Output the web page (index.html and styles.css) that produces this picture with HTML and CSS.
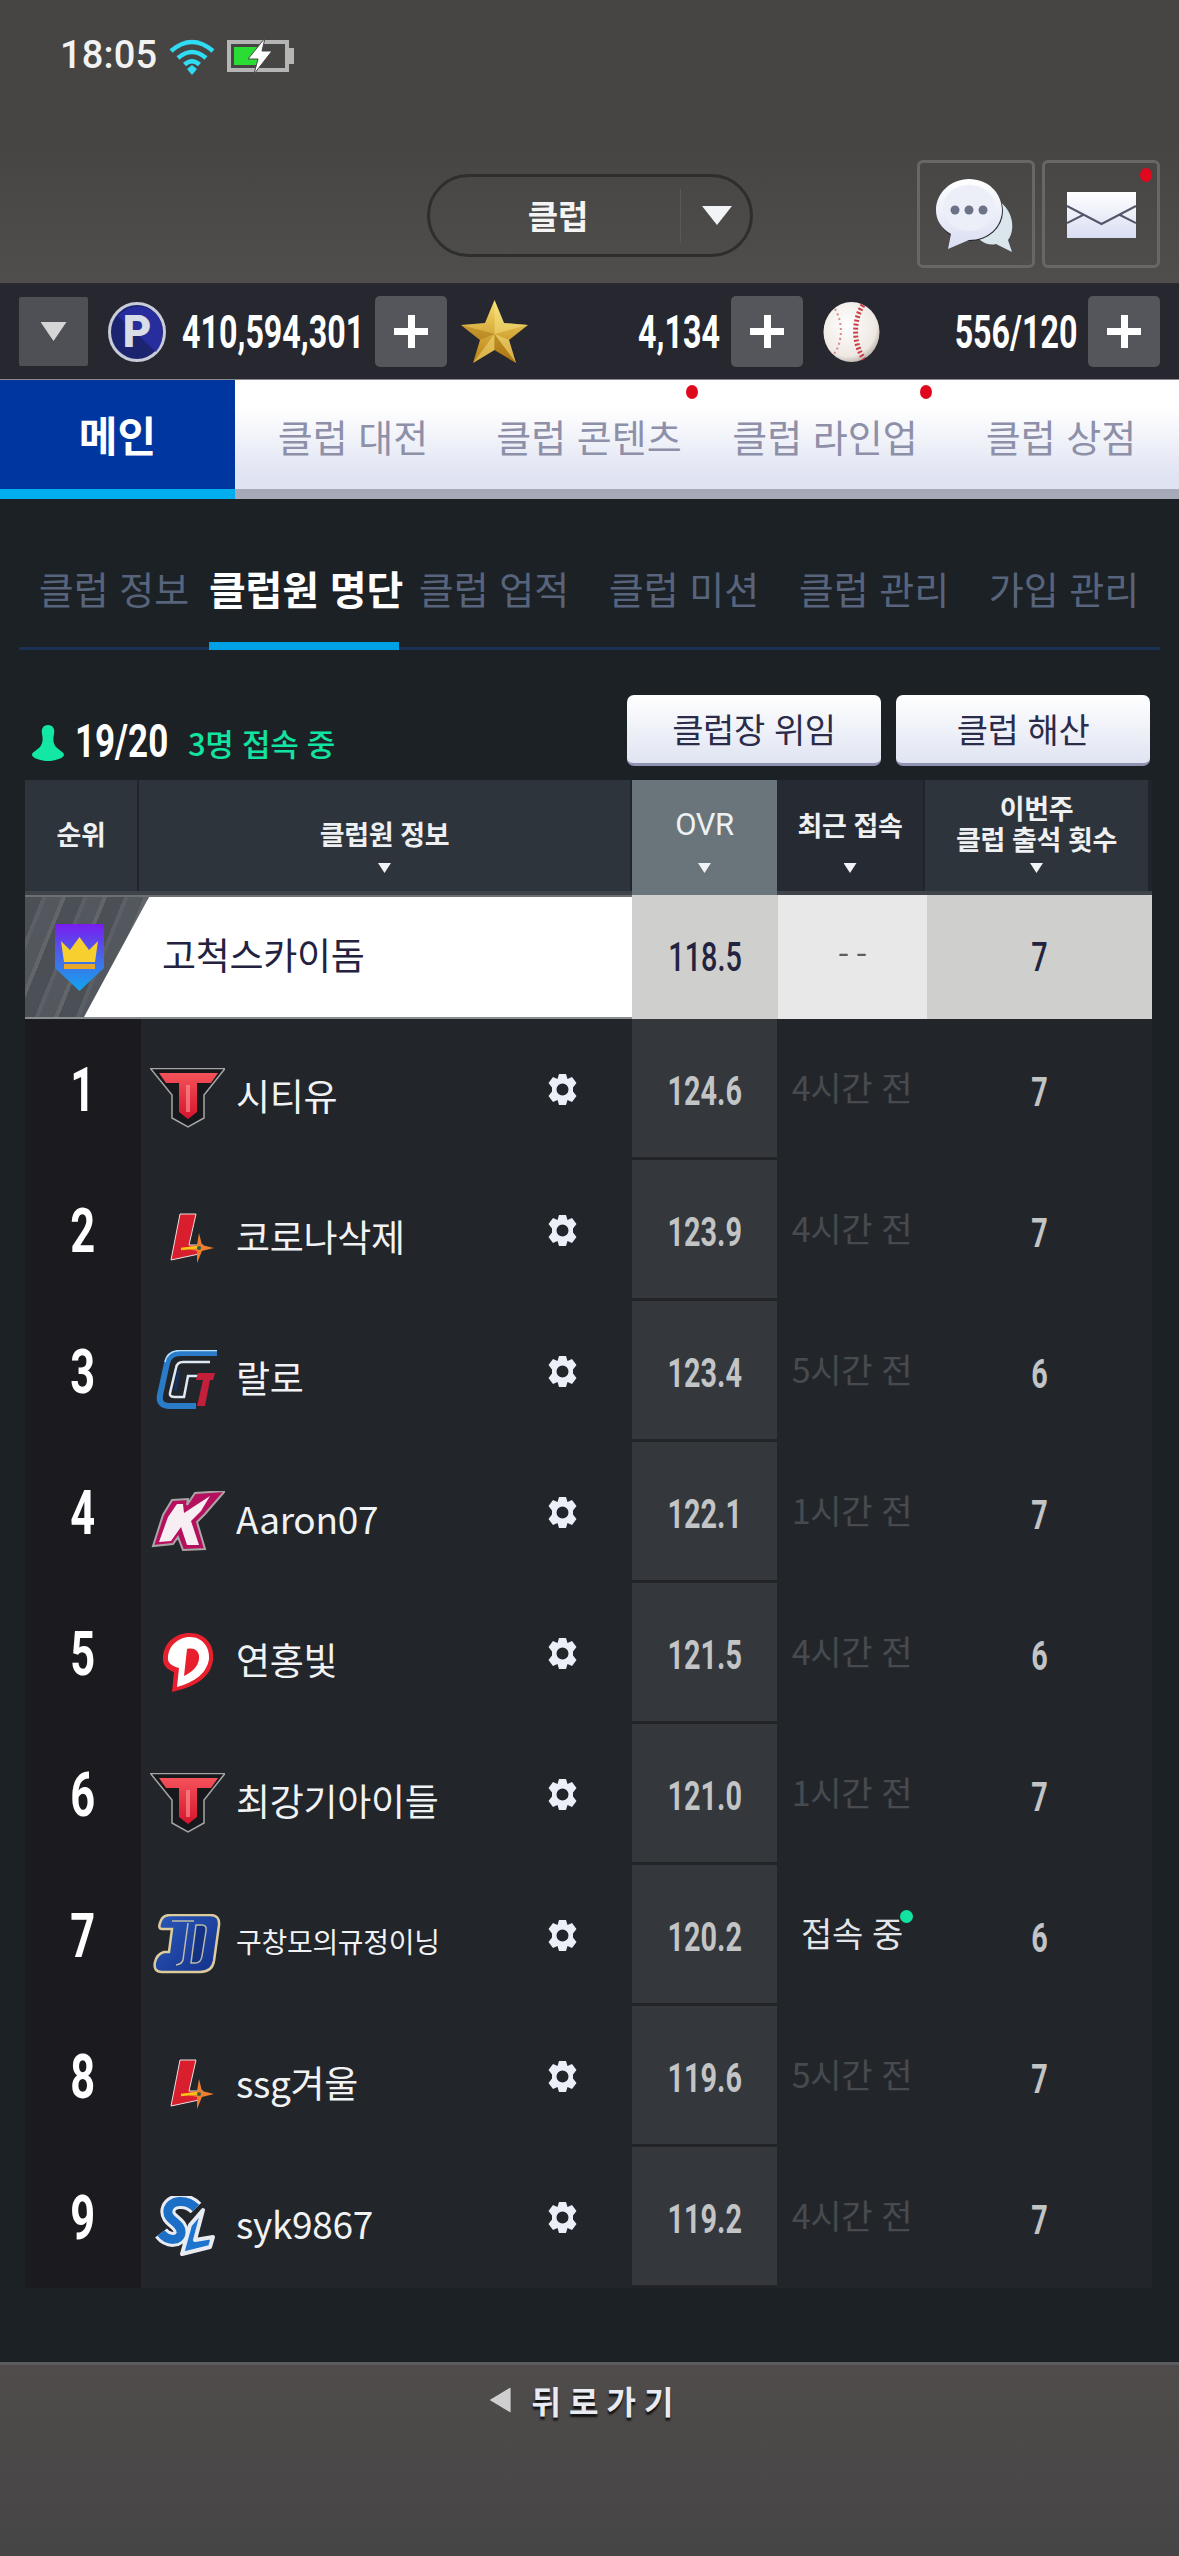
FILE: index.html
```html
<!DOCTYPE html>
<html lang="ko">
<head>
<meta charset="utf-8">
<title>클럽</title>
<link rel="stylesheet" href="styles.css">
</head>
<body>
<svg class="defs" aria-hidden="true">
  <defs>
    <linearGradient id="redT" x1="0" y1="0" x2="0" y2="1"><stop offset="0" stop-color="#f4525a"/><stop offset="1" stop-color="#d5142c"/></linearGradient>
    <linearGradient id="gold" x1="0" y1="0" x2="0" y2="1"><stop offset="0" stop-color="#f8dc6c"/><stop offset="1" stop-color="#b97f12"/></linearGradient>
    <linearGradient id="shield" x1="0" y1="0" x2="0" y2="1"><stop offset="0" stop-color="#7a1cf0"/><stop offset=".45" stop-color="#4a62e8"/><stop offset="1" stop-color="#12a6ee"/></linearGradient>
    <linearGradient id="bubble" x1="0" y1="0" x2="0" y2="1"><stop offset="0" stop-color="#fff"/><stop offset="1" stop-color="#d9ddf2"/></linearGradient>
    <linearGradient id="navy" x1="0" y1="0" x2="1" y2="1"><stop offset="0" stop-color="#2a58b8"/><stop offset="1" stop-color="#14308a"/></linearGradient>
    <radialGradient id="ballG" cx=".42" cy=".38" r=".7"><stop offset="0" stop-color="#fff"/><stop offset=".75" stop-color="#eee8e2"/><stop offset="1" stop-color="#a59c94"/></radialGradient>
  </defs>
  <symbol id="logoT" viewBox="0 0 75 60">
    <path d="M0.500 0.500H75L54 27V50L38 59 22 50V27Z" fill="#17181b" stroke="#a5a5a5" stroke-width="1.500"/>
    <path d="M9 5H68L61 15H47V44L38 51 29 44V15H16Z" fill="url(#redT)"/>
    <path d="M36 17H40V44H36Z" fill="#ff9a9a" opacity=".6"/>
  </symbol>
  <symbol id="logoL" viewBox="0 0 75 60">
    <path d="M30 5H46L39 36H53L49 45 21 51Z" fill="#d91f2e" stroke="#e8e0e0" stroke-width="1"/>
    <path d="M49 24 52 36 64 39 52 42 47 54 47 42 33 39 47 36Z" fill="#ee7d2e"/>
    <path d="M31 40 50 38" stroke="#f5c518" stroke-width="2.500"/>
    <circle cx="49" cy="39" r="2" fill="#2f5a44"/>
  </symbol>
  <symbol id="logoG" viewBox="0 0 75 60">
    <path d="M67 3H30Q19 3 17 13L10 45Q8 56 20 56H46" fill="none" stroke="#2a7cc8" stroke-width="6"/>
    <path d="M60 12H33Q27 12 26 18L20 43Q19 47 25 47H34L38 26H50" fill="none" stroke="#dfe9f5" stroke-width="2.500"/>
    <path d="M29 20 25 41" fill="none" stroke="#16305e" stroke-width="3"/>
    <path d="M65 23H48L46 30H53L47 56H55L60 30H63Z" fill="#c41f3a"/>
    <path d="M67 0.500H30Q17 1 15 12" fill="none" stroke="#bfe0f5" stroke-width="1.500"/>
  </symbol>
  <symbol id="logoK" viewBox="0 0 75 60">
    <path d="M22 9 38 8 37 14 45 2 75 0 55 23 47 31 55 58 33 59 28 46 23 53 3 55 13 24Z" fill="#b5105e" stroke="#aaa6a6" stroke-width="2"/>
    <path d="M27 13H33L34 22 60 5 51 20 41 30 49 54H37L31 36 21 50 9 51 18 26Z" fill="#f6eef2"/>
  </symbol>
  <symbol id="logoD" viewBox="0 0 75 60">
    <path d="M13 24C15 8 28 1 40 1 56 1 65 14 63 28 61 44 48 54 22 60L24 40C18 38 12 34 13 24Z" fill="#e8202e"/>
    <path d="M18 25C19 12 30 5 40 5 53 5 60 16 59 27 57 41 45 50 27 55L29 36C22 34 17 31 18 25Z" fill="#fff"/>
    <path d="M37 17C45 15 50 20 49 27 48 35 42 40 34 44Z" fill="#e8202e"/>
  </symbol>
  <symbol id="logoN" viewBox="0 0 75 60">
    <path d="M20 1H60Q70 1 69 11L64 47Q62 58 50 58H12Q3 58 5 48 7 40 14 38L19 38 22 15H12Q8 15 10 9 12 1 20 1Z" fill="url(#navy)" stroke="#dccc9c" stroke-width="2.500"/>
    <path d="M22 7H44M38 9 33 46Q32 50 26 51" fill="none" stroke="#d9cfa8" stroke-width="1.500" opacity=".85"/>
    <path d="M46 11H52Q57 11 56 17L52 42Q51 49 45 49H41Z" fill="#123080" stroke="#d9cfa8" stroke-width="1.500" opacity=".85"/>
  </symbol>
  <symbol id="logoS" viewBox="0 0 75 60">
    <path d="M46 12C36 2 20 4 18 14 16 25 32 26 31 37 30 45 18 46 11 37" fill="none" stroke="#e8ecf2" stroke-width="15"/>
    <path d="M53 14 45 44 63 41 60 51 32 58 40 29Z" fill="#1c74cc" stroke="#e8ecf2" stroke-width="4" stroke-linejoin="round"/>
    <path d="M46 12C36 2 20 4 18 14 16 25 32 26 31 37 30 45 18 46 11 37" fill="none" stroke="#1c6fc6" stroke-width="9"/>
  </symbol>
  <symbol id="gear" viewBox="0 0 33 33">
    <path fill="#eceef8" fill-rule="evenodd" d="M13 1H20L21.500 6 26 4 30.500 10 27 14.500V18.500L30.500 23 26 29 21.500 27 20 32H13L11.500 27 7 29 2.500 23 6 18.500V14.500L2.500 10 7 4 11.500 6ZM16.500 10.500A6 6 0 1 0 16.500 22.500 6 6 0 1 0 16.500 10.500Z"/>
  </symbol>
</svg>

<div class="page">
  <header class="top">
    <div class="status">
      <span class="clock">18:05</span>
      <svg class="wifi" viewBox="0 0 46 36"><g fill="none" stroke="#2fdcf2" stroke-width="4.500"><path d="M2 12Q23-6 44 12"/><path d="M9 19Q23 7 37 19"/><path d="M15.500 25.500Q23 19 30.500 25.500"/></g><path d="M18 30 23 26 28 30 23 36Z" fill="#2fdcf2"/></svg>
      <svg class="battery" viewBox="0 0 68 36"><rect x="2" y="4" width="58" height="28" fill="none" stroke="#b5b5b5" stroke-width="4"/><rect x="61" y="10" width="6" height="16" fill="#b5b5b5"/><rect x="7" y="9" width="28" height="18" fill="#2bdc35"/><path d="M38 0 21 21H31L27 36 45 13H35Z" fill="#fff" stroke="#474645" stroke-width="1"/></svg>
    </div>
    <div class="titlebar">
      <div class="pill">
        <span class="pill-label">클럽</span>
        <span class="pill-caret"><i class="tri tri-big"></i></span>
      </div>
      <div class="squares">
        <div class="square">
          <svg class="chat" viewBox="0 0 80 76">
            <path d="M46 18C60 18 74 28 76 44 77 52 75 58 72 62L76 74 60 66Q52 68 44 62Z" fill="#dae6ec"/>
            <ellipse cx="34" cy="33" rx="33" ry="30" fill="#272829"/>
            <path d="M33 1C52 1 66 15 66 32 66 49 52 62 33 62L12 71 15 56C5 50 0 42 0 32 0 15 15 1 33 1Z" fill="url(#bubble)"/>
            <ellipse cx="33" cy="30" rx="26" ry="23" fill="#eceef8"/>
            <circle cx="19" cy="32" r="4.500" fill="#6d7386"/><circle cx="33" cy="32" r="4.500" fill="#6d7386"/><circle cx="47" cy="32" r="4.500" fill="#6d7386"/>
          </svg>
        </div>
        <div class="square">
          <svg class="mail" viewBox="0 0 69 46">
            <rect width="69" height="46" fill="url(#bubble)"/>
            <path d="M0 14 34.500 32 69 14M0 31 16 23M69 31 53 23" fill="none" stroke="#55566a" stroke-width="2"/>
          </svg>
          <i class="reddot reddot-mail"></i>
        </div>
      </div>
    </div>
  </header>

  <section class="wallet">
    <button class="drop"><i class="tri tri-wallet"></i></button>
    <div class="wgroup wg1">
      <svg class="coin" viewBox="0 0 58 60">
        <ellipse cx="29" cy="30" rx="27.500" ry="28.500" fill="#1c2470" stroke="#c8ccd8" stroke-width="3"/>
        <path d="M10 14 48 50A26 26 0 0 0 54 30 25 25 0 0 0 46 10 26 26 0 0 0 10 14Z" fill="#2a2fa8" opacity=".8"/>
        <text x="29" y="45" class="coin-p">P</text>
      </svg>
      <span class="amount"><span class="cond cond-r">410,594,301</span></span>
      <button class="plus" aria-label="추가"></button>
    </div>
    <div class="wgroup wg2">
      <svg class="star" viewBox="0 0 67 63">
        <path d="M33.500 0 43 23 67 25 48 40 55 63 33.500 50 12 63 19 40 0 25 24 23Z" fill="url(#gold)"/>
        <path d="M33.500 0 33.500 34 67 25 43 23ZM33.500 34 55 63 48 40ZM33.500 34 12 63 33.500 50Z" fill="#fbe98c" opacity=".45"/>
        <path d="M33.500 34 0 25 19 40ZM33.500 34V50L55 63Z" fill="#9c6a0a" opacity=".4"/>
      </svg>
      <span class="amount"><span class="cond cond-r">4,134</span></span>
      <button class="plus" aria-label="추가"></button>
    </div>
    <div class="wgroup wg3">
      <svg class="ball" viewBox="0 0 57 60">
        <ellipse cx="28.500" cy="30" rx="28" ry="30" fill="url(#ballG)"/>
        <path d="M40 3C30 18 30 42 41 57" fill="none" stroke="#c9414a" stroke-width="5" stroke-dasharray="2 2"/>
        <path d="M12 7C20 20 20 40 11 52" fill="none" stroke="#d98a8a" stroke-width="2" stroke-dasharray="2 3"/>
      </svg>
      <span class="amount"><span class="cond cond-r">556/120</span></span>
      <button class="plus" aria-label="추가"></button>
    </div>
  </section>

  <nav class="tabs">
    <a class="tab tab-on">메인</a>
    <a class="tab">클럽 대전</a>
    <a class="tab">클럽 콘텐츠<i class="reddot reddot-tab"></i></a>
    <a class="tab">클럽 라인업<i class="reddot reddot-tab"></i></a>
    <a class="tab">클럽 상점</a>
  </nav>

  <nav class="subtabs">
    <a class="subtab">클럽 정보</a>
    <a class="subtab subtab-on">클럽원 명단</a>
    <a class="subtab">클럽 업적</a>
    <a class="subtab">클럽 미션</a>
    <a class="subtab">클럽 관리</a>
    <a class="subtab">가입 관리</a>
  </nav>

  <div class="countbar">
    <svg class="person" viewBox="0 0 32 36"><path d="M16 0C21 0 23 4 22 9 21 14 21 18 24 22 28 26 32 27 32 30 31 34 20 36 16 36 12 36 1 34 0 30 0 27 4 26 8 22 11 18 11 14 10 9 9 4 11 0 16 0Z" fill="#12e8a4"/></svg>
    <span class="count"><span class="cond cond-l">19/20</span></span>
    <span class="online">3명 접속 중</span>
    <div class="actions">
      <button class="action">클럽장 위임</button>
      <button class="action">클럽 해산</button>
    </div>
  </div>

  <div class="table">
    <div class="thead">
      <div class="th th-rank">순위</div>
      <div class="th">클럽원 정보<i class="tri"></i></div>
      <div class="th th-ovr th-up">OVR<i class="tri"></i></div>
      <div class="th th-recent th-up">최근 접속<i class="tri"></i></div>
      <div class="th th-att"><span>이번주<br>클럽 출석 횟수</span><i class="tri"></i></div>
    </div>

    <div class="myrow">
      <div class="myclub">
        <svg class="crest" viewBox="0 0 49 67">
          <path d="M0 0H49V44L24.500 67 0 44Z" fill="url(#shield)"/>
          <path d="M6 17 15 26 24.500 13 34 26 43 17 40 38H9Z" fill="#f7cf2e"/>
          <rect x="9" y="40" width="31" height="5" fill="#e8a62a"/>
        </svg>
        <span class="myname">고척스카이돔</span>
      </div>
      <div class="mycell my-ovr"><span class="cond cond-light">118.5</span></div>
      <div class="mycell my-recent">--</div>
      <div class="mycell my-att"><span class="cond cond-light">7</span></div>
    </div>

    <div class="row">
      <div class="rank"><span class="cond">1</span></div>
      <div class="info"><svg class="logo"><use href="#logoT"/></svg><span class="name">시티유</span><svg class="gear"><use href="#gear"/></svg></div>
      <div class="ovr"><span class="cond">124.6</span></div>
      <div class="recent">4시간 전</div>
      <div class="att"><span class="cond">7</span></div>
    </div>
    <div class="row">
      <div class="rank"><span class="cond">2</span></div>
      <div class="info"><svg class="logo"><use href="#logoL"/></svg><span class="name">코로나삭제</span><svg class="gear"><use href="#gear"/></svg></div>
      <div class="ovr"><span class="cond">123.9</span></div>
      <div class="recent">4시간 전</div>
      <div class="att"><span class="cond">7</span></div>
    </div>
    <div class="row">
      <div class="rank"><span class="cond">3</span></div>
      <div class="info"><svg class="logo"><use href="#logoG"/></svg><span class="name">랄로</span><svg class="gear"><use href="#gear"/></svg></div>
      <div class="ovr"><span class="cond">123.4</span></div>
      <div class="recent">5시간 전</div>
      <div class="att"><span class="cond">6</span></div>
    </div>
    <div class="row">
      <div class="rank"><span class="cond">4</span></div>
      <div class="info"><svg class="logo"><use href="#logoK"/></svg><span class="name">Aaron07</span><svg class="gear"><use href="#gear"/></svg></div>
      <div class="ovr"><span class="cond">122.1</span></div>
      <div class="recent">1시간 전</div>
      <div class="att"><span class="cond">7</span></div>
    </div>
    <div class="row">
      <div class="rank"><span class="cond">5</span></div>
      <div class="info"><svg class="logo"><use href="#logoD"/></svg><span class="name">연홍빛</span><svg class="gear"><use href="#gear"/></svg></div>
      <div class="ovr"><span class="cond">121.5</span></div>
      <div class="recent">4시간 전</div>
      <div class="att"><span class="cond">6</span></div>
    </div>
    <div class="row">
      <div class="rank"><span class="cond">6</span></div>
      <div class="info"><svg class="logo"><use href="#logoT"/></svg><span class="name">최강기아이들</span><svg class="gear"><use href="#gear"/></svg></div>
      <div class="ovr"><span class="cond">121.0</span></div>
      <div class="recent">1시간 전</div>
      <div class="att"><span class="cond">7</span></div>
    </div>
    <div class="row">
      <div class="rank"><span class="cond">7</span></div>
      <div class="info"><svg class="logo"><use href="#logoN"/></svg><span class="name name-small">구창모의규정이닝</span><svg class="gear"><use href="#gear"/></svg></div>
      <div class="ovr"><span class="cond">120.2</span></div>
      <div class="recent recent-on"><span class="on-wrap">접속 중<i class="greendot"></i></span></div>
      <div class="att"><span class="cond">6</span></div>
    </div>
    <div class="row">
      <div class="rank"><span class="cond">8</span></div>
      <div class="info"><svg class="logo"><use href="#logoL"/></svg><span class="name">ssg겨울</span><svg class="gear"><use href="#gear"/></svg></div>
      <div class="ovr"><span class="cond">119.6</span></div>
      <div class="recent">5시간 전</div>
      <div class="att"><span class="cond">7</span></div>
    </div>
    <div class="row">
      <div class="rank"><span class="cond">9</span></div>
      <div class="info"><svg class="logo"><use href="#logoS"/></svg><span class="name">syk9867</span><svg class="gear"><use href="#gear"/></svg></div>
      <div class="ovr"><span class="cond">119.2</span></div>
      <div class="recent">4시간 전</div>
      <div class="att"><span class="cond">7</span></div>
    </div>
  </div>

  <footer class="foot">
    <a class="back"><i class="back-arrow"></i><span class="back-label">뒤로가기</span></a>
  </footer>
</div>
</body>
</html>
```

FILE: styles.css
```css
* { box-sizing: border-box; }
html, body { margin: 0; padding: 0; background: #1c2126; }
body { font-family: "Noto Sans CJK KR", "Noto Sans", sans-serif; }
i { display: block; font-style: normal; }
a { display: block; }
button { border: 0; padding: 0; font: inherit; }
.defs { position: absolute; width: 0; height: 0; overflow: hidden; }

.page { width: 1179px; height: 2556px; display: flex; flex-direction: column; overflow: hidden; background: #1c2126; }

.cond { display: inline-block; font-family: Roboto, sans-serif; font-weight: 700; transform: scaleX(.72); }
.cond-r { transform-origin: right center; transform: scaleX(.7); }
.cond-l { transform-origin: left center; }
.cond-light { font-weight: 500; transform: scaleX(.72); }

.tri { width: 13px; height: 10px; background: #f2f3f6; clip-path: polygon(0 0, 100% 0, 50% 100%); }
.tri-big { width: 30px; height: 19px; }
.tri-wallet { width: 26px; height: 19px; background: #d5d5d5; }

/* top */
.top { height: 284px; flex: none; background: linear-gradient(#464544 0, #464544 50%, #504e4d 100%); border-bottom: 1px solid #2c2c2e; }
.status { height: 160px; display: flex; align-items: flex-start; padding: 34px 0 0 60px; }
.clock { font-family: Roboto, sans-serif; font-weight: 500; font-size: 38px; line-height: 42px; color: #f2f2f2; letter-spacing: .2px; }
.wifi { width: 46px; height: 36px; margin: 5px 0 0 12px; }
.battery { width: 68px; height: 36px; margin: 4px 0 0 12px; }
.titlebar { height: 108px; display: flex; align-items: center; }
.pill { width: 326px; height: 83px; margin: 3px 0 0 427px; border: 3px solid #2e2e2f; border-radius: 42px; display: flex; align-items: center; }
.pill-label { width: 250px; text-align: center; font-size: 33px; font-weight: 700; color: #f4f4f4; transform: translate(3px, -1px); }
.pill-caret { height: 54px; flex: 1; border-left: 1px solid #5a5958; display: flex; align-items: center; padding-left: 21px; }
.squares { margin-left: auto; margin-right: 20px; display: flex; gap: 7px; transform: translateX(1px); }
.square { position: relative; width: 118px; height: 108px; border: 3px solid #686766; border-radius: 6px; display: flex; align-items: center; justify-content: center; }
.chat { width: 80px; height: 76px; margin-top: 4px; }
.mail { width: 69px; height: 46px; margin-top: 2px; }
.reddot { position: absolute; width: 12px; height: 14px; border-radius: 50%; background: #e0081c; }
.reddot-mail { top: 5px; right: 5px; }

/* wallet */
.wallet { height: 95px; flex: none; display: flex; align-items: center; padding-left: 19px; background: #26272f; }
.drop { width: 69px; height: 69px; flex: none; background: #4e5056; border-radius: 2px; display: flex; align-items: center; justify-content: center; }
.wgroup { display: flex; align-items: center; flex: none; }
.wg1 { width: 339px; margin-left: 20px; }
.wg2 { width: 342px; margin-left: 14px; }
.wg3 { width: 337px; margin-left: 20px; }
.coin { width: 58px; height: 60px; flex: none; }
.coin-p { font-family: Roboto, sans-serif; font-weight: 900; font-size: 44px; fill: #d8dde6; text-anchor: middle; }
.star { width: 67px; height: 63px; flex: none; }
.ball { width: 57px; height: 60px; flex: none; }
.amount { flex: 1; min-width: 0; display: flex; justify-content: flex-end; padding-right: 11px; font-size: 46px; line-height: 54px; color: #fff; white-space: nowrap; }
.plus { width: 72px; height: 71px; flex: none; border-radius: 5px; background: linear-gradient(#fff, #fff) center / 34px 7px no-repeat, linear-gradient(#fff, #fff) center / 7px 33px no-repeat, #55565c; }

/* tabs */
.tabs { height: 120px; flex: none; display: grid; grid-template-columns: 235px repeat(4, 236px); background: linear-gradient(#fff 0, #fff 25%, #dfe3f2 90%); border-bottom: 10px solid #a5a9b8; border-top: 1px solid #8a8b92; }
.tab { position: relative; display: flex; align-items: center; justify-content: center; font-size: 38px; color: #8d90a8; padding-top: 2px; white-space: nowrap; }
.tab-on { margin-bottom: -10px; border-bottom: 10px solid #00aeef; background: #0036a0; color: #fff; font-size: 42px; font-weight: 700; padding-top: 0; padding-bottom: 2px; }
.reddot-tab { top: 5px; right: 9px; }
.tab:nth-child(4) .reddot-tab { right: 11px; }

/* sub tabs */
.subtabs { flex: none; height: 151px; margin: 0 19px; display: grid; grid-template-columns: repeat(6, 190px); border-bottom: 3px solid #1b3154; }
.subtab { height: 151px; padding-top: 61px; text-align: center; font-size: 38px; line-height: 56px; color: #57647c; white-space: nowrap; }
.subtab-on { height: 151px; font-size: 40px; font-weight: 700; color: #fff; border-bottom: 8px solid #00a0e6; letter-spacing: -.2px; }

.countbar { flex: none; height: 71px; margin-top: 45px; display: flex; align-items: flex-end; padding: 0 29px 0 32px; }
.person { width: 32px; height: 36px; flex: none; margin-bottom: 5px; }
.count { width: 124px; flex: none; padding-left: 11px; font-size: 46px; line-height: 50px; color: #fff; }
.count .cond { transform: scaleX(.76); }
.online { font-size: 31px; font-weight: 500; line-height: 46px; color: #12e3a0; letter-spacing: -.3px; }
.actions { margin-left: auto; display: flex; gap: 15px; align-self: stretch; }
.action { width: 254px; height: 71px; padding-bottom: 2px; border-radius: 7px; border-bottom: 3px solid #8f93b2; background: linear-gradient(#fff 0, #e0e4f2 100%); font-size: 34px; color: #2a2c4a; letter-spacing: -.4px; }

/* table */
.table { flex: none; width: 1127px; margin: 14px 0 0 25px; }
.thead { height: 115px; display: grid; grid-template-columns: 114px 493px 145px 148px 227px; border-bottom: 4px solid #3e444a; background: #2e343b; }
.th { display: flex; flex-direction: column; align-items: center; padding: 38px 0 18px; font-size: 27px; line-height: 32px; font-weight: 700; color: #eef0f2; border-right: 2px solid #20252b; text-align: center; letter-spacing: -.4px; }
.th-up { padding-top: 29px; }
.th .tri { margin-top: auto; }
.th-ovr { background: #6a757b; border-right: 0; margin-bottom: -4px; padding-bottom: 22px; font-family: Roboto, sans-serif; font-weight: 400; font-size: 31px; }
.th-recent { background: #262b33; }
.th-att { padding-top: 12px; border-right: 4px solid #20252b; line-height: 31px; }

.myrow { height: 124px; display: grid; grid-template-columns: 607px 146px 149px 225px; font-size: 36px; color: #23223f; }
.myclub { position: relative; display: flex; align-items: center; background: #fff; border-top: 2px solid #6c7073; border-bottom: 2px solid #8a8d90; }
.myclub::before { content: ""; position: absolute; left: 0; top: 0; width: 124px; height: 100%; background: repeating-linear-gradient(112deg, #4b5057 0 16px, #5c6066 16px 20px, #53575e 20px 34px, #62666b 34px 38px); clip-path: polygon(0 0, 100% 0, 59px 100%, 0 100%); }
.crest { position: relative; width: 49px; height: 67px; flex: none; margin: 0 0 0 30px; }
.myname { position: relative; margin-left: 58px; font-size: 37px; letter-spacing: -.3px; transform: translateY(-3px); }
.mycell { display: flex; align-items: center; justify-content: center; font-size: 40px; }
.my-ovr, .my-att { background: #cfcfcd; }
.my-recent { background: #e8e8e8; font-family: "Liberation Mono", monospace; font-size: 30px; color: #5c5c60; padding-bottom: 4px; }

.row { height: 141px; display: grid; grid-template-columns: 116px 491px 145px 150px 225px; background: #22262b; }
.rank { display: flex; align-items: center; justify-content: center; background: #1b1b1f; font-size: 62px; color: #fff; }
.rank .cond { transform: scaleX(.7); }
.info { display: flex; align-items: center; padding: 0 53px 0 9px; }
.logo { width: 75px; height: 60px; flex: none; margin-top: 17px; overflow: visible; }
.name { margin: 11px 0 0 11px; font-size: 37px; line-height: 50px; color: #f1f2f4; white-space: nowrap; letter-spacing: -.3px; }
.name-small { font-size: 28px; margin-top: 11px; }
.gear { width: 33px; height: 33px; flex: none; margin-left: auto; }
.ovr { display: flex; align-items: center; justify-content: center; padding: 7px 0 0 1px; background: #34373c; border-bottom: 3px solid #222428; font-size: 40px; color: #c3c4c6; }
.recent { display: flex; align-items: center; justify-content: center; padding-bottom: 6px; font-size: 34px; letter-spacing: -.3px; color: #474b50; white-space: nowrap; }
.recent-on { color: #e4e5e8; }
.on-wrap { position: relative; }
.greendot { position: absolute; top: 2px; right: -10px; width: 13px; height: 13px; border-radius: 50%; background: #12e3a0; }
.att { display: flex; align-items: center; justify-content: center; padding-top: 5px; font-size: 40px; color: #c3c4c6; }

/* footer */
.foot { margin-top: auto; height: 194px; flex: none; border-top: 3px solid #5b5b60; background: linear-gradient(#4f4c4b 0, #464545 100%); }
.back { display: flex; align-items: center; justify-content: center; height: 70px; padding: 0 16px 0 0; }
.back-arrow { width: 21px; height: 25px; background: #cfcfcf; clip-path: polygon(100% 0, 100% 100%, 0 50%); margin-right: 21px; }
.back-label { font-size: 32px; font-weight: 700; line-height: 40px; letter-spacing: 8px; margin-right: -8px; color: #e9ebf2; text-shadow: 0 3px 2px #111; }
```
